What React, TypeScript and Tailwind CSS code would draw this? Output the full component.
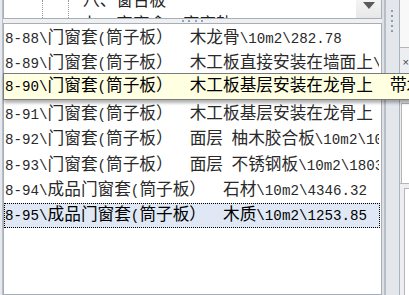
import React from 'react';

// Latin runs are drawn in a mono face at half the CJK advance, like SimSun
function Txt({ s }: { s: string }) {
  const parts = s.match(/[\x00-\x7f]+|[^\x00-\x7f]+/g) ?? [];
  return (
    <span className="leading-[17px] whitespace-pre">
      {parts.map((p, i) =>
        /^[\x00-\x7f]/.test(p) ? (
          <span key={i} className="font-['Liberation_Mono',monospace] text-[14.2px]">
            {p}
          </span>
        ) : (
          <span key={i} className="font-['Noto_Sans_CJK_SC',sans-serif] text-[16.67px]">
            {p}
          </span>
        )
      )}
    </span>
  );
}

const rows = [
  '8-88\\门窗套(筒子板）  木龙骨\\10m2\\282.78',
  '8-89\\门窗套(筒子板）  木工板直接安装在墙面上\\10m2\\1895.20',
  '8-90\\门窗套(筒子板）  木工板基层安装在龙骨上  带木线条\\10m2\\2213.40',
  '8-91\\门窗套(筒子板）  木工板基层安装在龙骨上  不带木线条\\10m2\\1984.06',
  '8-92\\门窗套(筒子板）  面层 柚木胶合板\\10m2\\1005.54',
  '8-93\\门窗套(筒子板）  面层 不锈钢板\\10m2\\1803.47',
  '8-94\\成品门窗套(筒子板）  石材\\10m2\\4346.32',
  '8-95\\成品门窗套(筒子板）  木质\\10m2\\1253.85',
];

const selected = 7;

export default function App() {
  return (
    <div className="relative w-[409px] h-[295px] overflow-hidden flex bg-[#e6e9ee] text-[#2a2a2a]">
      {/* left frame edge */}
      <div className="w-[3px] flex">
        <div className="w-[2px] bg-[#e6e9ee]" />
        <div className="w-[1px] bg-[#b8bec6]" />
      </div>

      {/* tree + list column */}
      <div className="w-[379px] flex flex-col">
        {/* tree, scrolled so only the bottom of one item shows */}
        <div className="h-[19px] flex border-x border-b border-[#a9aeb5] bg-white overflow-hidden">
          <div className="w-[38px]" />
          <div className="w-0 border-l border-dotted border-[#9a9a9a]" />
          <div className="w-[25px]" />
          <div className="w-0 border-l border-dotted border-[#9a9a9a]" />
          <div className="w-[14px]" />
          <div className="flex-1 flex flex-col mt-[-11px] font-['Noto_Sans_CJK_SC',sans-serif] text-[16.67px] leading-[21px] text-[#222]">
            <div>八、窗台板</div>
            <div className="mt-[3px]">九、窗帘盒、窗帘轨</div>
          </div>
          <div className="w-[25px] bg-gradient-to-b from-[#f4f4f4] to-[#e8e8e8] flex justify-center pt-[2px]">
            <svg width="12" height="7" viewBox="0 0 12 7">
              <path d="M0 0 H12 L6 7 Z" fill="#5a5a5a" />
            </svg>
          </div>
        </div>

        {/* horizontal splitter */}
        <div className="h-[4px] bg-[#eef0f3] flex justify-center items-center gap-[4.5px]">
          <div className="w-[2px] h-[2px] bg-[#97a3b1]" />
          <div className="w-[2px] h-[2px] bg-[#97a3b1]" />
          <div className="w-[2px] h-[2px] bg-[#97a3b1]" />
          <div className="w-[2px] h-[2px] bg-[#97a3b1]" />
        </div>

        {/* list */}
        <div className="flex-1 border border-[#a9aeb5] bg-white pt-[1px] flex flex-col">
          {rows.map((r, i) => (
            <div
              key={r}
              className={
                i === selected
                  ? 'h-[25.4px] flex items-center overflow-hidden whitespace-nowrap border border-dotted border-black bg-[#dfe8f4] text-black mr-[1px]'
                  : 'h-[25.4px] flex items-center overflow-hidden whitespace-nowrap border border-transparent mr-[1px]'
              }
            >
              <Txt s={r} />
            </div>
          ))}
        </div>
      </div>

      {/* vertical splitter */}
      <div className="w-[19px] flex">
        <div className="w-[2px] bg-[#dde1e6]" />
        <div className="w-[2px] bg-[#b8bec6]" />
        <div className="flex-1 bg-[#e3e7ec] flex flex-col items-center pt-[10px] gap-[3px]">
          <div className="w-[2px] h-[2px] bg-[#8f9cab]" />
          <div className="w-[2px] h-[2px] bg-[#8f9cab]" />
          <div className="w-[2px] h-[2px] bg-[#8f9cab]" />
          <div className="w-[2px] h-[2px] bg-[#8f9cab]" />
          <div className="w-[2px] h-[2px] bg-[#8f9cab]" />
        </div>
        <div className="w-[1px] bg-[#aab2bc]" />
      </div>

      {/* neighbouring panel, mostly off screen */}
      <div className="flex-1 flex flex-col bg-[#eceef1]">
        <div className="h-[48px] bg-[#f8f8f8] border-b border-[#b5b5b5]" />
        <div className="h-[55px] pl-[3px] pt-[6px] font-['Liberation_Sans',sans-serif] text-[11px] text-[#444]">×</div>
        <div className="h-[80px] ml-[1px] bg-white border-l border-t border-[#b5b5b5]" />
        <div className="h-[5px] border-t border-[#b5b5b5]" />
        <div className="flex-1 ml-[4px] bg-white border-l border-t border-[#b5b5b5]" />
      </div>

      {/* hover tooltip over row 8-90 */}
      <div className="absolute left-[3px] top-[73px] h-[27px] w-[430px] bg-[#ffffe1] border border-[#7a7a7a] shadow-[1px_3px_3px_rgba(0,0,0,0.3)] flex items-center pl-[1px] pb-[2px] whitespace-nowrap text-black">
        <Txt s={'8-90\\门窗套(筒子板）  木工板基层安装在龙骨上  带木线条\\10m2\\2213.40'} />
      </div>
    </div>
  );
}
